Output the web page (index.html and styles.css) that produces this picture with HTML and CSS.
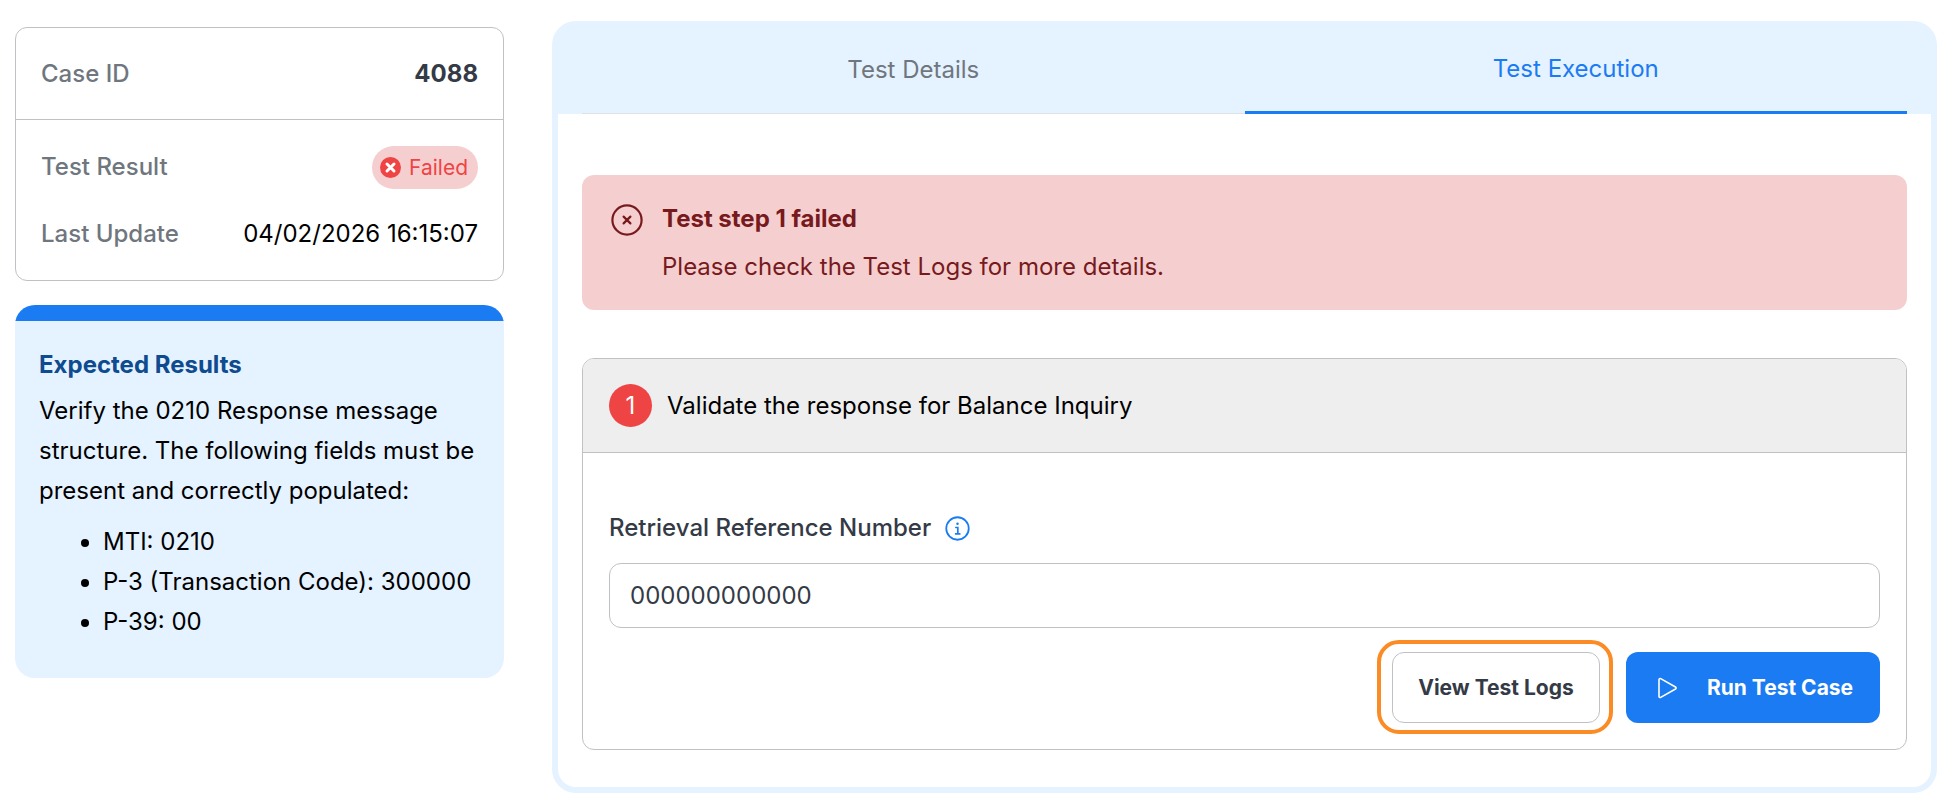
FILE: index.html
```html
<!DOCTYPE html>
<html lang="en">
<head>
    <title>Test Case</title>
    <meta charset="UTF-8">
    <link rel="stylesheet" href="styles.css">
</head>
<body>
    <div class="page">
        <aside class="sidebar">
            <div class="summary-card">
                <div class="summary-head">
                    <span class="summary-label">Case ID</span>
                    <span class="case-id">4088</span>
                </div>
                <div class="summary-body">
                    <div class="summary-row">
                        <span class="summary-label result-label">Test Result</span>
                        <span class="status-pill">
                            <svg viewBox="0 0 24 24" class="status-icon">
                                <circle cx="12" cy="12" r="12" fill="#ef4444"></circle>
                                <path d="M8 8l8 8M16 8l-8 8" stroke="#fff" stroke-width="3.4" stroke-linecap="round"></path>
                            </svg>
                            Failed
                        </span>
                    </div>
                    <div class="summary-row">
                        <span class="summary-label">Last Update</span>
                        <span class="summary-value">04/02/2026 16:15:07</span>
                    </div>
                </div>
            </div>

            <div class="expected-card">
                <div class="expected-bar"></div>
                <div class="expected-body">
                    <h2>Expected Results</h2>
                    <p>Verify the 0210 Response message structure. The following fields must be present and correctly populated:</p>
                    <ul>
                        <li>MTI: 0210</li>
                        <li>P-3 (Transaction Code): 300000</li>
                        <li>P-39: 00</li>
                    </ul>
                </div>
            </div>
        </aside>

        <main class="panel">
            <div class="tabs">
                <div class="tab">Test Details</div>
                <div class="tab active">Test Execution</div>
            </div>

            <div class="panel-content">
                <div class="alert">
                    <svg viewBox="0 0 32 32" class="alert-icon">
                        <circle cx="16" cy="16" r="14.6" fill="none" stroke="#771a1d" stroke-width="2.2"></circle>
                        <path d="M12.6 12.6l6.8 6.8M19.4 12.6l-6.8 6.8" stroke="#771a1d" stroke-width="2.2" stroke-linecap="round"></path>
                    </svg>
                    <div>
                        <div class="alert-title">Test step 1 failed</div>
                        <div class="alert-text">Please check the Test Logs for more details.</div>
                    </div>
                </div>

                <div class="step-card">
                    <div class="step-head">
                        <span class="step-number">1</span>
                        <span>Validate the response for Balance Inquiry</span>
                    </div>
                    <div class="step-body">
                        <div class="field-label">
                            Retrieval Reference Number
                            <svg viewBox="0 0 24 24" class="info-icon">
                                <circle cx="12" cy="12" r="10.8" fill="none" stroke="#1b7bf2" stroke-width="1.7"></circle>
                                <path d="M10.4 11h1.9v6M10.2 17.2h4" fill="none" stroke="#1b7bf2" stroke-width="1.6" stroke-linecap="round"></path>
                                <circle cx="12" cy="7.4" r="1.2" fill="#1b7bf2"></circle>
                            </svg>
                        </div>
                        <input class="field-input" type="text" value="000000000000">
                        <div class="actions">
                            <button class="btn btn-outline">View Test Logs</button>
                            <button class="btn btn-primary">
                                <svg viewBox="0 0 24 24" class="play-icon">
                                    <path d="M4 3.6v16.8c0 .9 1 1.4 1.7 1L20.5 13c.8-.5.8-1.500 0-2L5.700 2.600C5 2.200 4 2.700 4 3.600z" fill="none" stroke="#fff" stroke-width="1.600" stroke-linejoin="round"></path>
                                </svg>
                                Run Test Case
                            </button>
                        </div>
                    </div>
                </div>
            </div>
        </main>
    </div>
</body>
</html>
```

FILE: styles.css
```css
:root {
    --primary-color: #1b7bf2;
    --light-blue: #e5f2ff;
    --border-color: #bfc1c4;
    --danger-color: #ef4444;
    --danger-light: #f5cfd0;
    --danger-dark: #771a1d;
    --muted-color: #6f767e;
    --dark-color: #343a46;
}

* {
    margin: 0;
    padding: 0;
    box-sizing: border-box;
}

body {
    font-family: Inter, "Liberation Sans", sans-serif;
    background-color: #fff;
    color: #000;
}

.page {
    display: flex;
    align-items: flex-start;
    gap: 48px;
    padding: 21px 19px 21px 15px;
}

/* Sidebar */
.sidebar {
    width: 489px;
    flex-shrink: 0;
    display: flex;
    flex-direction: column;
    gap: 24px;
    padding-top: 6px;
}

.summary-card {
    border: 1px solid var(--border-color);
    border-radius: 12px;
    font-size: 24px;
}

.summary-head {
    display: flex;
    justify-content: space-between;
    align-items: center;
    height: 92px;
    padding: 0 25px;
    border-bottom: 1px solid var(--border-color);
}

.summary-body {
    display: flex;
    flex-direction: column;
    gap: 26px;
    padding: 26px 25px 29px;
}

.summary-row {
    display: flex;
    justify-content: space-between;
    align-items: center;
    min-height: 36px;
}

.summary-label {
    color: var(--muted-color);
    font-weight: 500;
}

.result-label {
    margin-bottom: 2px;
}

.case-id {
    color: var(--dark-color);
    font-weight: 700;
}

.status-pill {
    display: inline-flex;
    align-items: center;
    gap: 8px;
    height: 43px;
    padding: 0 10px 0 8px;
    border-radius: 22px;
    background-color: var(--danger-light);
    color: var(--danger-color);
    font-size: 21px;
}

.status-icon {
    width: 21px;
    height: 21px;
}

.expected-card {
    background-color: var(--light-blue);
    border-radius: 20px;
    overflow: hidden;
    font-size: 24px;
    line-height: 40px;
}

.expected-bar {
    height: 16px;
    background-color: var(--primary-color);
}

.expected-body {
    padding: 24px 24px 36px;
}

.expected-card h2 {
    margin-bottom: 6px;
    color: #0e4b8f;
    font-size: 24px;
    font-weight: 700;
    line-height: 40px;
}

.expected-card ul {
    margin-top: 11px;
    padding-left: 64px;
}

/* Panel */
.panel {
    flex: 1;
    background-color: var(--light-blue);
    border-radius: 24px;
    padding: 0 6px 6px;
}

.tabs {
    display: flex;
    height: 93px;
    padding: 0 24px;
}

.tab {
    flex: 1;
    display: flex;
    align-items: center;
    justify-content: center;
    padding-top: 4px;
    color: var(--muted-color);
    font-size: 24px;
    border-bottom: 1px solid #dfe3e8;
}

.tab.active {
    color: var(--primary-color);
    border-bottom: 3px solid var(--primary-color);
}

.panel-content {
    background-color: #fff;
    border-radius: 0 0 18px 18px;
    padding: 61px 24px 37px;
    display: flex;
    flex-direction: column;
    gap: 48px;
}

.alert {
    display: flex;
    gap: 19px;
    height: 135px;
    padding: 28px 29px;
    border-radius: 12px;
    background-color: var(--danger-light);
    color: var(--danger-dark);
    font-size: 24px;
}

.alert-icon {
    width: 32px;
    height: 32px;
    flex-shrink: 0;
    margin-top: 1px;
}

.alert-title {
    font-weight: 700;
    line-height: 32px;
}

.alert-text {
    margin-top: 16px;
    line-height: 32px;
}

.step-card {
    border: 1px solid var(--border-color);
    border-radius: 12px;
    overflow: hidden;
}

.step-head {
    display: flex;
    align-items: center;
    gap: 15px;
    height: 94px;
    padding: 0 26px;
    background-color: #eeeeee;
    border-bottom: 1px solid var(--border-color);
    font-size: 24px;
}

.step-number {
    display: flex;
    align-items: center;
    justify-content: center;
    width: 43px;
    height: 43px;
    border-radius: 50%;
    background-color: var(--danger-color);
    color: #fff;
}

.step-body {
    padding: 59px 26px 26px;
}

.field-label {
    display: flex;
    align-items: center;
    gap: 14px;
    color: var(--dark-color);
    font-size: 24px;
    font-weight: 500;
    line-height: 32px;
}

.info-icon {
    width: 25px;
    height: 25px;
}

.field-input {
    display: block;
    width: 100%;
    height: 65px;
    margin-top: 19px;
    padding: 0 20px;
    border: 1px solid var(--border-color);
    border-radius: 12px;
    outline: none;
    color: var(--dark-color);
    font-family: inherit;
    font-size: 24px;
}

.actions {
    display: flex;
    justify-content: flex-end;
    gap: 26px;
    margin-top: 24px;
}

.btn {
    display: inline-flex;
    align-items: center;
    justify-content: center;
    height: 71px;
    border-radius: 12px;
    font-family: inherit;
    font-size: 21px;
    font-weight: 700;
}

.btn-outline {
    position: relative;
    width: 208px;
    background-color: #fff;
    border: 1px solid var(--border-color);
    color: var(--dark-color);
}

/* Orange callout round the logs button */
.btn-outline::after {
    content: "";
    position: absolute;
    inset: -13px -14px -12px -16px;
    border: 4px solid #fb8b24;
    border-radius: 22px;
}

.btn-primary {
    width: 254px;
    gap: 28px;
    padding-left: 2px;
    background-color: var(--primary-color);
    border: none;
    color: #fff;
}

.play-icon {
    width: 24px;
    height: 24px;
}
```
